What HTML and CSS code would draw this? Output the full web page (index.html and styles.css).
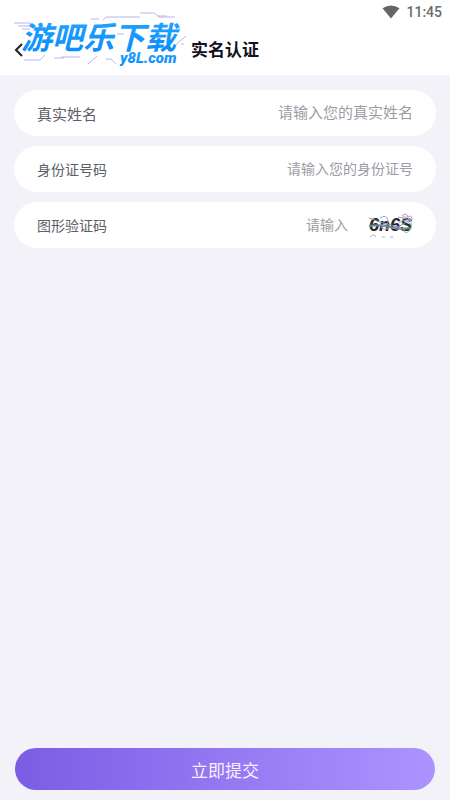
FILE: index.html
```html
<!DOCTYPE html>
<html lang="zh-CN">
<head>
<meta charset="utf-8">
<meta name="viewport" content="width=device-width, initial-scale=1">
<title>实名认证</title>
<link rel="stylesheet" href="styles.css">
</head>
<body>
<form class="screen">
  <header class="top">
    <div class="status">
      <svg class="wifi" width="18" height="14" viewBox="0 0 18 14" aria-hidden="true"><path d="M0.5 3.2Q9-2.4 17.5 3.2L9 13.4Z"/></svg>
      <span>11:45</span>
    </div>
    <div class="nav">
      <button class="back" type="button" aria-label="返回">
        <svg width="10" height="16" viewBox="0 0 10 16" aria-hidden="true"><path d="M8 2L2 8L8 14"/></svg>
      </button>
      <h1 class="title">实名认证</h1>
    </div>
    <svg class="brand" width="190" height="72" viewBox="0 0 190 72" role="img" aria-label="游吧乐下载 y8L.com">
      <defs>
        <linearGradient id="blue" x1="0" y1="0" x2="0" y2="1">
          <stop offset="0" stop-color="#27a8ff"/>
          <stop offset="1" stop-color="#0788fb"/>
        </linearGradient>
      </defs>
      <g class="circuit">
        <path d="M14 23H31M18 26H32M22 29H30"/>
        <path d="M91 19H99M103 20L106 17H140"/>
        <path d="M140 13H154L159 17H175M158 16H167"/>
        <path d="M24 60H40L45 55M54 58H64M61 57H80M88 64L97 56"/>
        <path d="M106 59H111L116 64M117 34H124M174 46L186 36M181 44H184M177 33L180 28"/>
      </g>
      <text class="brand-name" x="21" y="49">游吧乐下载</text>
      <text class="brand-site" x="120" y="63">y8L.com</text>
    </svg>
  </header>
  <main class="fields">
    <div class="field field-name">
      <label for="name">真实姓名</label>
      <input id="name" type="text" placeholder="请输入您的真实姓名">
    </div>
    <div class="field">
      <label for="idno">身份证号码</label>
      <input id="idno" type="text" placeholder="请输入您的身份证号">
    </div>
    <div class="field">
      <label for="code">图形验证码</label>
      <input id="code" type="text" placeholder="请输入">
      <svg class="captcha" width="45" height="28" viewBox="0 0 45 28" role="img" aria-label="验证码">
        <text x="1" y="20">6n6S</text>
        <g class="noise">
          <path stroke="#6f8b91" stroke-width="2" d="M1 15Q12 13 22 16T42 17"/>
          <path stroke="#84949b" d="M1 7L15 12L30 16L42 9"/>
          <path stroke="#92a4e8" d="M12 7Q18 3 20 9T12 14M31 12Q37 6 43 14"/>
          <path stroke="#bd8be0" d="M34 5Q38 1 40 6Q44 3 44 9M25 18Q29 12 32 18"/>
          <path stroke="#81cf8a" d="M34 6Q41 5 43 11Q45 17 40 21Q36 23 36 18"/>
          <path stroke="#d68ba8" d="M13 16Q17 20 21 17M30 6L43 9"/>
          <path stroke="#8fbcd1" d="M2 26Q6 22 8 26M14 26H17M22 26H25"/>
        </g>
      </svg>
    </div>
  </main>
  <footer class="actions">
    <button class="submit" type="submit">立即提交</button>
  </footer>
</form>
</body>
</html>
```
FILE: styles.css
```css
* {
  box-sizing: border-box;
}

body {
  margin: 0;
  background: #f3f2f8;
  font-family: Roboto, "Noto Sans CJK SC", sans-serif;
}

.screen {
  display: flex;
  flex-direction: column;
  min-height: 100vh;
}

.top {
  position: relative;
  padding-bottom: 8px;
  background: #fff;
}

.status {
  display: flex;
  align-items: center;
  justify-content: flex-end;
  gap: 6px;
  height: 24px;
  padding-right: 8px;
  color: #6b6b6b;
  font-size: 14px;
  font-weight: 500;
}

.wifi {
  fill: #666;
}

.nav {
  display: grid;
  grid-template-columns: 40px 1fr 40px;
  align-items: center;
  height: 43px;
  padding: 8px 14px 0;
}

.back {
  display: flex;
  padding: 0;
  border: 0;
  background: none;
}

.back path {
  fill: none;
  stroke: #20222b;
  stroke-width: 2;
}

.title {
  margin: 0;
  color: #11131c;
  font-size: 17px;
  font-weight: 700;
  line-height: 24px;
  text-align: center;
}

.brand {
  position: absolute;
  top: 0;
  left: 0;
  pointer-events: none;
}

.circuit {
  fill: none;
  stroke: #b9b4ee;
  stroke-width: 1;
}

.brand-name,
.brand-site {
  fill: url(#blue);
  font-style: italic;
}

.brand-name {
  font-family: "Noto Sans CJK SC", sans-serif;
  font-size: 31px;
  font-weight: 700;
}

.brand-site {
  font-family: Roboto, sans-serif;
  font-size: 15px;
  font-weight: 900;
}

.fields {
  display: flex;
  flex: 1;
  flex-direction: column;
  gap: 10px;
  padding: 15px 14px;
}

.field {
  display: flex;
  align-items: center;
  gap: 20px;
  height: 46px;
  padding: 0 23px;
  border-radius: 23px;
  background: #fff;
  color: #5c5e68;
  font-size: 14px;
}

.field-name {
  font-size: 15px;
}

.field input {
  flex: 1;
  min-width: 0;
  padding: 0;
  border: 0;
  outline: 0;
  background: none;
  color: inherit;
  font: inherit;
  text-align: right;
}

.field input::placeholder {
  color: #9c9ca6;
  opacity: 1;
}

.captcha text {
  fill: #25282d;
  font-family: "Liberation Sans", sans-serif;
  font-size: 18px;
  font-style: italic;
  font-weight: 700;
}

.noise {
  fill: none;
}

.actions {
  padding: 0 15px 10px;
}

.submit {
  width: 100%;
  height: 42px;
  border: 0;
  border-radius: 21px;
  background: linear-gradient(90deg, #7b5de5, #ab94ff);
  color: #f5f0ff;
  font-family: inherit;
  font-size: 17px;
}
```
